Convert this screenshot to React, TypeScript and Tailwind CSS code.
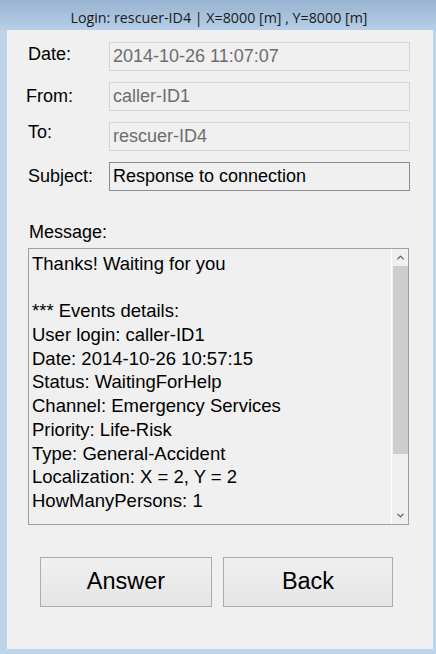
import { ChevronUp, ChevronDown } from "lucide-react";

const details = [
    "Thanks! Waiting for you",
    "",
    "*** Events details:",
    "User login: caller-ID1",
    "Date: 2014-10-26 10:57:15",
    "Status: WaitingForHelp",
    "Channel: Emergency Services",
    "Priority: Life-Risk",
    "Type: General-Accident",
    "Localization: X = 2, Y = 2",
    "HowManyPersons: 1",
];

function Field({ label, value, labelClass, enabled }: { label: string; value: string; labelClass: string; enabled?: boolean }) {
    return (
        <div className="flex flex-row h-[29px] mb-[11px]">
            <div className={`w-[102px] text-[18px] leading-[20px] text-black ${labelClass}`}>{label}</div>
            <div
                className={
                    enabled
                        ? "w-[301px] h-[29px] border border-[#8c8c8c] bg-[#f0f0f0] px-[3px] text-[18px] leading-[26px] text-black"
                        : "w-[301px] h-[29px] border border-[#d6d6d6] bg-[#f0f0f0] px-[3px] text-[18px] leading-[26px] text-[#6d6d6d]"
                }
            >
                {value}
            </div>
        </div>
    );
}

export default function App() {
    return (
        <div className="w-[436px] h-[654px] bg-[#bcd3ea] flex flex-col font-['Liberation_Sans',Arial,sans-serif] overflow-hidden">
            <div className="h-[30px] flex items-center justify-center bg-gradient-to-b from-[#98b3d0] to-[#b7cfe8]">
                <span className="text-[14.25px] leading-[20px] text-[#1a1a1a] font-['Open_Sans',sans-serif] mt-[5px] ml-[2px]">
                    Login: rescuer-ID4 | X=8000 [m] , Y=8000 [m]
                </span>
            </div>
            <div className="flex flex-row flex-1">
                <div className="w-[7px]" />
                <div className="w-[426px] h-[619px] bg-[#f0f0f0] flex flex-col">
                    <div className="pt-[12px]">
                        <Field label="Date:" value="2014-10-26 11:07:07" labelClass="pl-[21px] pt-[2px]" />
                        <Field label="From:" value="caller-ID1" labelClass="pl-[19px] pt-[4px]" />
                        <Field label="To:" value="rescuer-ID4" labelClass="pl-[21px] pt-[0px]" />
                        <Field label="Subject:" value="Response to connection" labelClass="pl-[21px] pt-[4px]" enabled />
                    </div>
                    <div className="pl-[22px] mt-[20px] text-[18px] leading-[20px] text-black">Message:</div>
                    <div className="ml-[21px] mt-[6px] w-[381px] h-[277px] border border-[#a0a0a0] flex flex-row">
                        <div className="flex-1 pl-[3px] pt-[3px] text-[18.5px] leading-[23.7px] text-black overflow-hidden">
                            {details.map((line, i) => (
                                <div key={i} className="h-[23.7px] whitespace-nowrap">{line}</div>
                            ))}
                        </div>
                        <div className="w-[17px] h-full border-l border-white flex flex-col items-center">
                            <div className="h-[17px] flex items-center justify-center text-[#606060]">
                                <ChevronUp size={11} strokeWidth={3} />
                            </div>
                            <div className="w-[15px] h-[188px] bg-[#cdcdcd]" />
                            <div className="flex-1" />
                            <div className="h-[17px] flex items-center justify-center text-[#606060]">
                                <ChevronDown size={11} strokeWidth={3} />
                            </div>
                        </div>
                    </div>
                    <div className="flex flex-row pl-[33px] mt-[32px] gap-[11px]">
                        <button className="w-[172px] h-[50px] border border-[#acacac] bg-gradient-to-b from-[#f0f0f0] to-[#e5e5e5] text-[23.5px] text-black">
                            Answer
                        </button>
                        <button className="w-[170px] h-[50px] border border-[#acacac] bg-gradient-to-b from-[#f0f0f0] to-[#e5e5e5] text-[23.5px] text-black">
                            Back
                        </button>
                    </div>
                </div>
                <div className="w-[3px]" />
            </div>
        </div>
    );
}
